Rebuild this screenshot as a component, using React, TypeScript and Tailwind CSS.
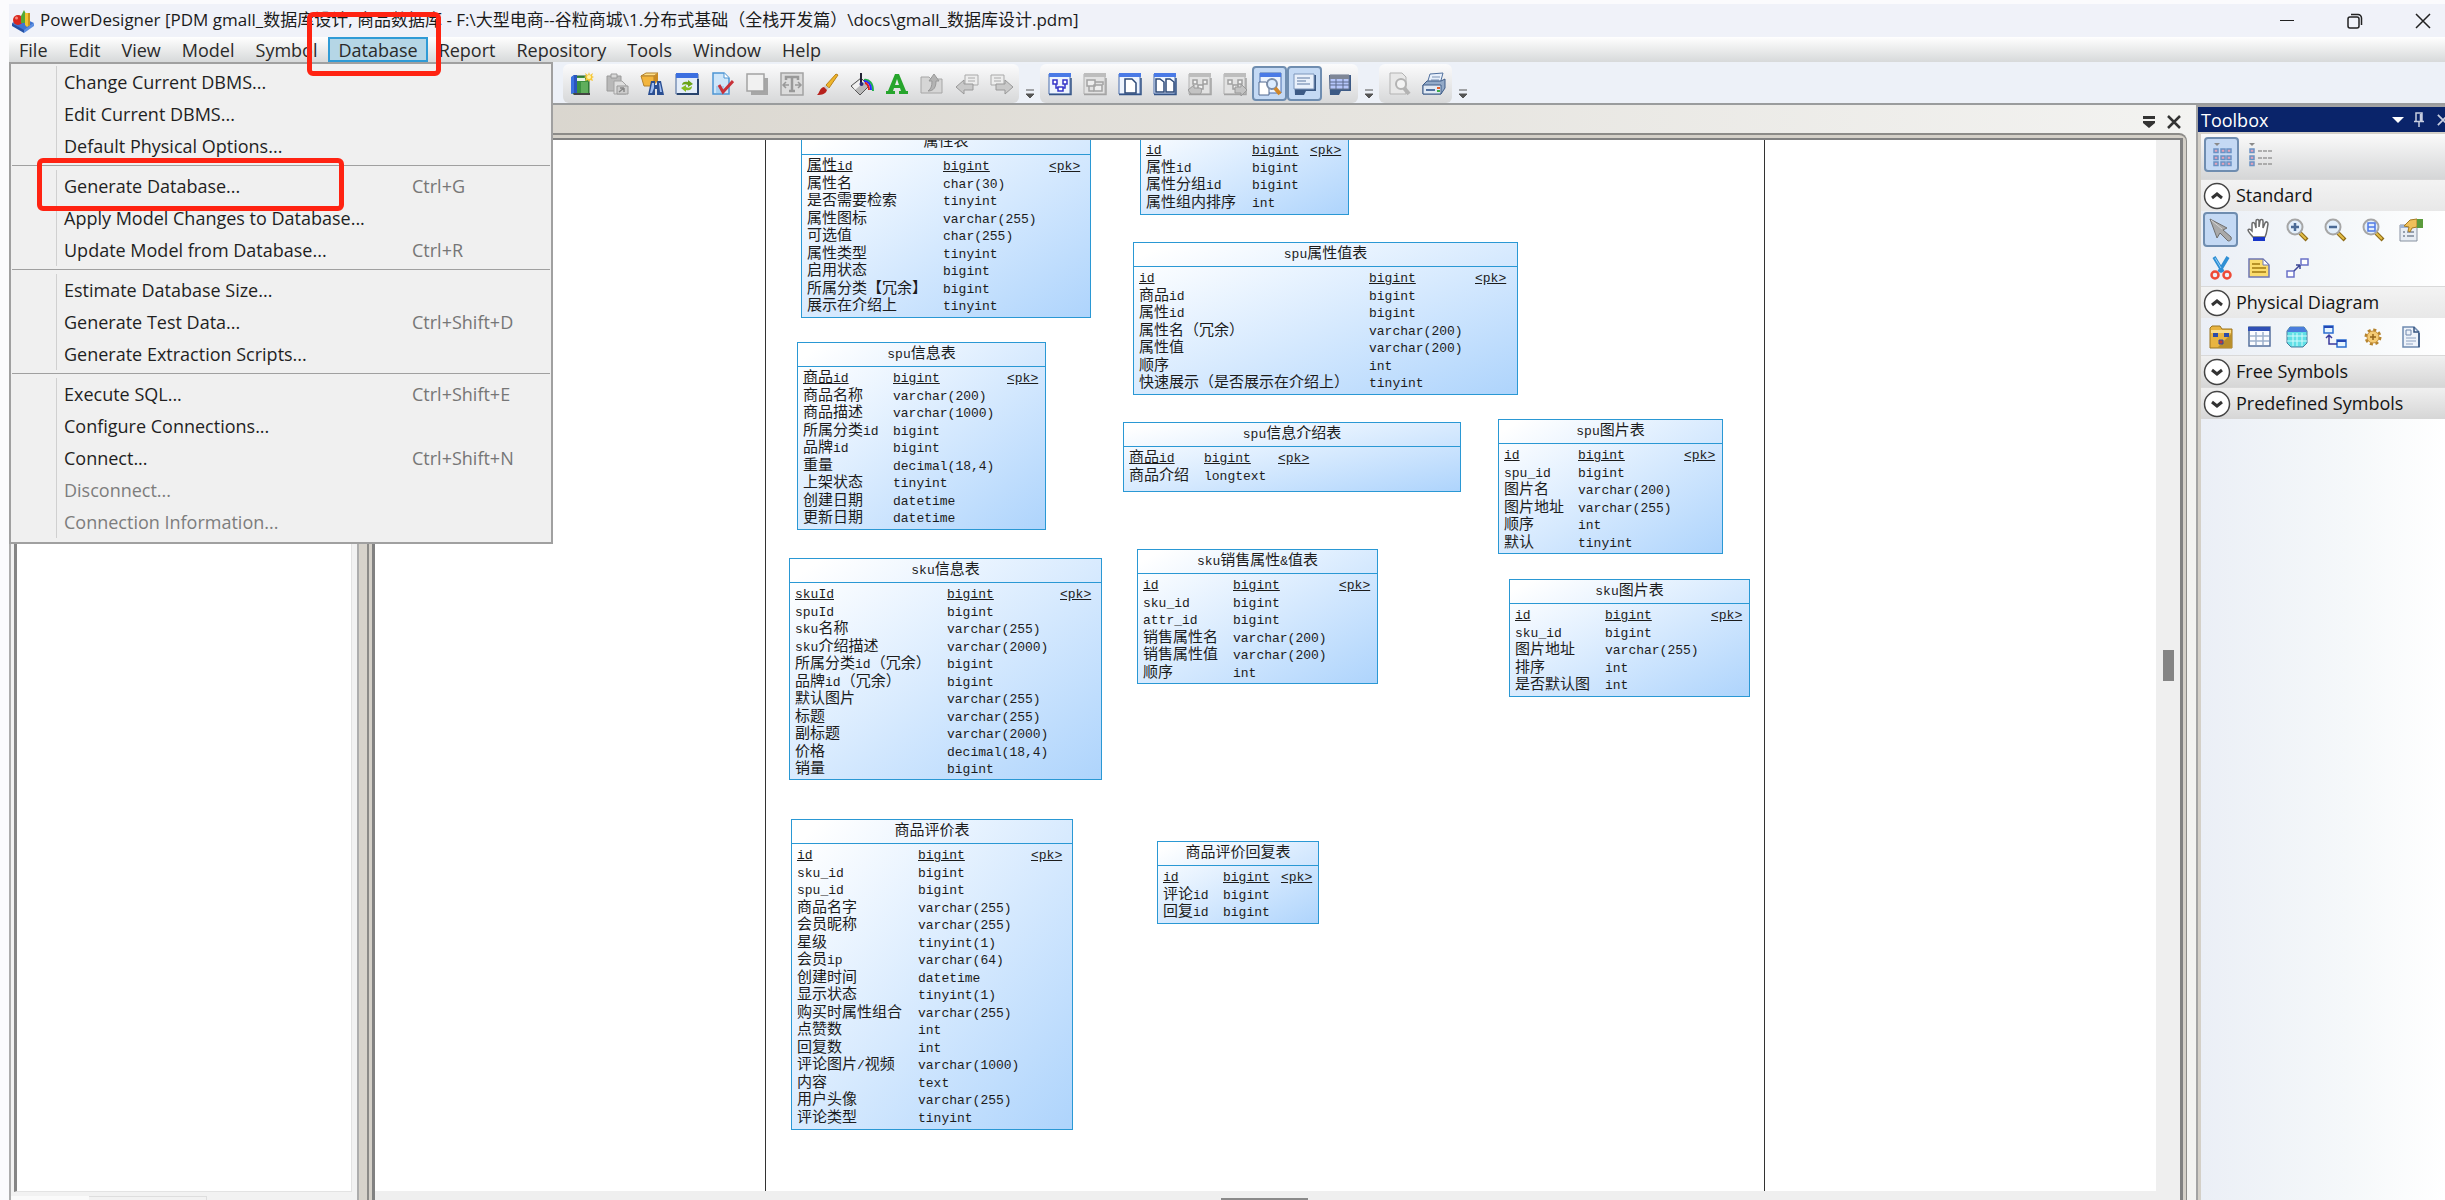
import clsx from "clsx";
import { Fragment, useState, type ReactNode } from "react";

type Column = [name: string, type: string];

interface EntityData {
  title: string;
  box: string;
  nameCol: string;
  typeCol: string;
  columns: Column[];
}

interface MenuEntry {
  label: string;
  shortcut?: string;
  disabled?: boolean;
}

const menus = [
  "File",
  "Edit",
  "View",
  "Model",
  "Symbol",
  "Database",
  "Report",
  "Repository",
  "Tools",
  "Window",
  "Help",
];

const databaseMenu: MenuEntry[][] = [
  [
    { label: "Change Current DBMS..." },
    { label: "Edit Current DBMS..." },
    { label: "Default Physical Options..." },
  ],
  [
    { label: "Generate Database...", shortcut: "Ctrl+G" },
    { label: "Apply Model Changes to Database..." },
    { label: "Update Model from Database...", shortcut: "Ctrl+R" },
  ],
  [
    { label: "Estimate Database Size..." },
    { label: "Generate Test Data...", shortcut: "Ctrl+Shift+D" },
    { label: "Generate Extraction Scripts..." },
  ],
  [
    { label: "Execute SQL...", shortcut: "Ctrl+Shift+E" },
    { label: "Configure Connections..." },
    { label: "Connect...", shortcut: "Ctrl+Shift+N" },
    { label: "Disconnect...", disabled: true },
    { label: "Connection Information...", disabled: true },
  ],
];

// First column of every entity is its primary key.
const entities: EntityData[] = [
  {
    title: "属性表",
    box: "left-[426px] top-[-10px] w-[290px] h-[188px]",
    nameCol: "w-[136px]",
    typeCol: "w-[106px]",
    columns: [
      ["属性id", "bigint"],
      ["属性名", "char(30)"],
      ["是否需要检索", "tinyint"],
      ["属性图标", "varchar(255)"],
      ["可选值", "char(255)"],
      ["属性类型", "tinyint"],
      ["启用状态", "bigint"],
      ["所属分类【冗余】", "bigint"],
      ["展示在介绍上", "tinyint"],
    ],
  },
  {
    title: "",
    box: "left-[765px] top-[-26px] w-[209px] h-[101px]",
    nameCol: "w-[106px]",
    typeCol: "w-[58px]",
    columns: [
      ["id", "bigint"],
      ["属性id", "bigint"],
      ["属性分组id", "bigint"],
      ["属性组内排序", "int"],
    ],
  },
  {
    title: "spu属性值表",
    box: "left-[758px] top-[102px] w-[385px] h-[153px]",
    nameCol: "w-[230px]",
    typeCol: "w-[106px]",
    columns: [
      ["id", "bigint"],
      ["商品id", "bigint"],
      ["属性id", "bigint"],
      ["属性名（冗余）", "varchar(200)"],
      ["属性值", "varchar(200)"],
      ["顺序", "int"],
      ["快速展示（是否展示在介绍上）", "tinyint"],
    ],
  },
  {
    title: "spu信息表",
    box: "left-[422px] top-[202px] w-[249px] h-[188px]",
    nameCol: "w-[90px]",
    typeCol: "w-[114px]",
    columns: [
      ["商品id", "bigint"],
      ["商品名称", "varchar(200)"],
      ["商品描述", "varchar(1000)"],
      ["所属分类id", "bigint"],
      ["品牌id", "bigint"],
      ["重量", "decimal(18,4)"],
      ["上架状态", "tinyint"],
      ["创建日期", "datetime"],
      ["更新日期", "datetime"],
    ],
  },
  {
    title: "spu信息介绍表",
    box: "left-[748px] top-[282px] w-[338px] h-[70px]",
    nameCol: "w-[75px]",
    typeCol: "w-[74px]",
    columns: [
      ["商品id", "bigint"],
      ["商品介绍", "longtext"],
    ],
  },
  {
    title: "spu图片表",
    box: "left-[1123px] top-[279px] w-[225px] h-[135px]",
    nameCol: "w-[74px]",
    typeCol: "w-[106px]",
    columns: [
      ["id", "bigint"],
      ["spu_id", "bigint"],
      ["图片名", "varchar(200)"],
      ["图片地址", "varchar(255)"],
      ["顺序", "int"],
      ["默认", "tinyint"],
    ],
  },
  {
    title: "sku图片表",
    box: "left-[1134px] top-[439px] w-[241px] h-[118px]",
    nameCol: "w-[90px]",
    typeCol: "w-[106px]",
    columns: [
      ["id", "bigint"],
      ["sku_id", "bigint"],
      ["图片地址", "varchar(255)"],
      ["排序", "int"],
      ["是否默认图", "int"],
    ],
  },
  {
    title: "sku信息表",
    box: "left-[414px] top-[418px] w-[313px] h-[222px]",
    nameCol: "w-[152px]",
    typeCol: "w-[113px]",
    columns: [
      ["skuId", "bigint"],
      ["spuId", "bigint"],
      ["sku名称", "varchar(255)"],
      ["sku介绍描述", "varchar(2000)"],
      ["所属分类id（冗余）", "bigint"],
      ["品牌id（冗余）", "bigint"],
      ["默认图片", "varchar(255)"],
      ["标题", "varchar(255)"],
      ["副标题", "varchar(2000)"],
      ["价格", "decimal(18,4)"],
      ["销量", "bigint"],
    ],
  },
  {
    title: "sku销售属性&值表",
    box: "left-[762px] top-[409px] w-[241px] h-[135px]",
    nameCol: "w-[90px]",
    typeCol: "w-[106px]",
    columns: [
      ["id", "bigint"],
      ["sku_id", "bigint"],
      ["attr_id", "bigint"],
      ["销售属性名", "varchar(200)"],
      ["销售属性值", "varchar(200)"],
      ["顺序", "int"],
    ],
  },
  {
    title: "商品评价表",
    box: "left-[416px] top-[679px] w-[282px] h-[311px]",
    nameCol: "w-[121px]",
    typeCol: "w-[113px]",
    columns: [
      ["id", "bigint"],
      ["sku_id", "bigint"],
      ["spu_id", "bigint"],
      ["商品名字", "varchar(255)"],
      ["会员昵称", "varchar(255)"],
      ["星级", "tinyint(1)"],
      ["会员ip", "varchar(64)"],
      ["创建时间", "datetime"],
      ["显示状态", "tinyint(1)"],
      ["购买时属性组合", "varchar(255)"],
      ["点赞数", "int"],
      ["回复数", "int"],
      ["评论图片/视频", "varchar(1000)"],
      ["内容", "text"],
      ["用户头像", "varchar(255)"],
      ["评论类型", "tinyint"],
    ],
  },
  {
    title: "商品评价回复表",
    box: "left-[782px] top-[701px] w-[162px] h-[83px]",
    nameCol: "w-[60px]",
    typeCol: "w-[58px]",
    columns: [
      ["id", "bigint"],
      ["评论id", "bigint"],
      ["回复id", "bigint"],
    ],
  },
];

function Svg({ children, className }: { children: ReactNode; className?: string }) {
  return (
    <svg viewBox="0 0 24 24" className={clsx("shrink-0", className ?? "size-6")} fill="none" aria-hidden="true">
      {children}
    </svg>
  );
}

function LogoIcon() {
  return (
    <Svg>
      <path d="M1 14 12 9l11 5-10 8z" fill="#3f74d1" />
      <path d="M1 14v3l12 7v-3z" fill="#2450a4" />
      <path d="M23 14v3l-10 7v-3z" fill="#5b8de0" />
      <circle cx="7" cy="11" r="5" fill="#d9281e" />
      <circle cx="5.500" cy="9" r="1.500" fill="#f58a80" />
      <path d="M10 7l3-6 3 6v7h-6z" fill="#52a935" />
      <path d="M14 4h5v12l-3 2-2-2z" fill="#f2c230" />
      <path d="M17 4h2v12l-2 1z" fill="#c8931b" />
    </Svg>
  );
}

/* ---------- toolbar icons ---------- */

function BookIcon() {
  return (
    <Svg>
      <path d="M3 4h16v18H3z" fill="#3c9140" stroke="#24602a" />
      <path d="M1 5l3-2v18l-3 1z" fill="#3b72e0" />
      <path d="M4 3h3v18H4z" fill="#2b55bd" />
      <path d="M7 6h8v3H7z" fill="#e9f5e4" />
      <path d="M11 10h7v11h-7z" fill="#5fae5c" />
      <path d="M4 22h16" stroke="#444" strokeWidth="2" />
      <path d="M19 0l1 3 3-2-1 3 2 1-2 1 1 3-3-1-1 2-1-2-3 1 1-3-2-1 2-1-1-3 3 2z" fill="#f6c73a" />
      <circle cx="19" cy="5" r="2" fill="#fff3a8" />
    </Svg>
  );
}

function PasteIcon() {
  return (
    <Svg>
      <path d="M2 4h14v15H2z" fill="#b9b9b9" stroke="#9a9a9a" />
      <path d="M6 2h6v4H6z" fill="#d9d9d9" stroke="#9a9a9a" />
      <path d="M9 9h8l4 4v9H9z" fill="#dedede" stroke="#a3a3a3" />
      <path d="M12 14h11v8H12z" fill="#cdcdcd" stroke="#999" />
      <path d="M14 20l5-4m0 0h-4m4 0v4" stroke="#888" strokeWidth="1.500" />
    </Svg>
  );
}

function FindIcon() {
  return (
    <Svg>
      <path d="M1 4l5-3h12l-4 3z" fill="#ffe08a" stroke="#b3812a" />
      <path d="M1 4h13v10H4z" fill="#f3b53d" stroke="#b3812a" />
      <path d="M14 4l4-3v8l-4 4z" fill="#c98a22" />
      <path d="M11 9h4v4h2V9h4l3 14h-7v-6h-2v6H8z" fill="#2b4f92" />
      <path d="M12 11h2v5l-2 5h-2zM19 11h1l2 9h-2z" fill="#9fbdf0" />
    </Svg>
  );
}

function RefreshIcon() {
  return (
    <Svg>
      <path d="M1 2h22v20H1z" fill="#e4edf9" stroke="#456598" />
      <path d="M1 1h22v5H1z" fill="#3c6fe0" />
      <path d="M2 22h21V7" stroke="#28446d" strokeWidth="2" />
      <path d="M7 13c0-3 3-4 6-3V8l5 4-5 3v-2c-2-1-4-1-6 0z" fill="#6aa319" />
      <path d="M17 14c0 4-3 5-6 4v2l-5-4 5-3v2c2 1 4 1 6-1z" fill="#86bd22" />
    </Svg>
  );
}

function CheckDocIcon() {
  return (
    <Svg>
      <path d="M3 1h11l5 5v16H3z" fill="#cfe6f9" stroke="#4d95d3" strokeWidth="1.500" />
      <path d="M14 1v5h5" fill="#fff" stroke="#4d95d3" />
      <path d="M6 14h8v7H6z" fill="#a7d0f0" />
      <path d="M9 13l4 7 10-11" stroke="#c8323a" strokeWidth="3" />
    </Svg>
  );
}

function ShadowIcon() {
  return (
    <Svg>
      <path d="M6 6h17v17H6z" fill="#a6a6a6" />
      <path d="M2 2h17v17H2z" fill="#f1f1f1" stroke="#a3a3a3" strokeWidth="1.500" />
    </Svg>
  );
}

function TextFrameIcon() {
  return (
    <Svg>
      <path d="M1 1h22v22H1z" fill="#dcdcdc" stroke="#a3a3a3" strokeWidth="1.500" />
      <path d="M6 8V5h12v3M12 5v14M9 19h6" stroke="#999" strokeWidth="2.500" />
      <path d="M3 13h6m-3-3-3 3 3 3M21 13h-6m3-3 3 3-3 3" stroke="#999" strokeWidth="1.500" />
    </Svg>
  );
}

function BrushIcon() {
  return (
    <Svg>
      <path d="M21 2l2 1-9 13-3-3z" fill="#eeb52a" stroke="#b9801a" />
      <path d="M10 13l4 3-2 2-3-3z" fill="#c9c9c9" />
      <path d="M9 15l3 3c-1 4-5 5-10 5 3-2 2-7 7-8z" fill="#b7211c" />
    </Svg>
  );
}

function BucketIcon() {
  return (
    <Svg>
      <path d="M11 6l8 8-9 9-9-9z" fill="#b9b9b9" stroke="#555" />
      <path d="M11 7l3 3-9 8-3-4z" fill="#f1f1f1" />
      <path d="M11 13V1" stroke="#223" strokeWidth="2" />
      <circle cx="11.500" cy="12" r="2" fill="#2c2c7a" />
      <path d="M14 8c5-1 9 3 9 11" stroke="#22b14c" strokeWidth="2" />
      <path d="M14 9c4 0 7 3 7 9" stroke="#2929ff" strokeWidth="2" />
      <path d="M15 11c2 0 4 3 4 7" stroke="#e02020" strokeWidth="2" />
    </Svg>
  );
}

function FontIcon() {
  return (
    <Svg>
      <path d="M10 2h4l7 17h2v3h-9v-3h2l-1-3H9l-1 3h2v3H1v-3h2zm2 5-2 6h4z" fill="#26a52c" fillRule="evenodd" />
    </Svg>
  );
}

function FolderUpIcon() {
  return (
    <Svg>
      <path d="M1 5h8l2 2h11v14H1z" fill="#d6d6d6" stroke="#a6a6a6" />
      <path d="M8 19c6 0 8-4 8-10h3l-5-7-5 7h3c0 5-1 8-4 10z" fill="#b3b3b3" stroke="#999" />
    </Svg>
  );
}

function ArrowIcon({ flip }: { flip?: boolean }) {
  return (
    <Svg className={clsx("size-6", flip && "-scale-x-100")}>
      <path d="M10 3h13v10H10z" fill="#ededed" stroke="#a9a9a9" />
      <path d="M13 6h7M13 9h7" stroke="#aaa" />
      <path d="M1 15l8-7v4h9v6H9v4z" fill="#c9c9c9" stroke="#999" />
    </Svg>
  );
}

function WindowIcon({ gray, children }: { gray?: boolean; children: ReactNode }) {
  return (
    <Svg>
      <path d="M1 2h21v20H1z" fill={gray ? "#e2e2e2" : "#eef4fd"} stroke={gray ? "#b0b0b0" : "#4a6fae"} />
      <path d="M1 1h22v4H1z" fill={gray ? "#bdbdbd" : "#4a7ae6"} />
      <path d="M1 22.500h22V6" stroke={gray ? "#a3a3a3" : "#345486"} strokeWidth="1.500" />
      {children}
    </Svg>
  );
}

function DiagramWindowIcon() {
  return (
    <WindowIcon>
      <path d="M5 8h4v4H5zM15 8h4v4h-4zM10 15h5v4h-5z" fill="#fff" stroke="#3535c8" strokeWidth="1.500" />
      <path d="M8 12v4h2M17 12v4h-2" stroke="#3535c8" strokeWidth="1.500" />
    </WindowIcon>
  );
}

function HistoryWindowIcon({ flip }: { flip?: boolean }) {
  return (
    <WindowIcon gray>
      <path d="M5 8h4v4H5zM15 8h4v4h-4zM10 13h5v4h-5z" fill="#f3f3f3" stroke="#a0a0a0" strokeWidth="1.500" />
      <path
        d={flip ? "M24 18l-6-6v3h-6v6h6v3z" : "M0 18l6-5v3h6c2 0 2 5 0 6H3z"}
        fill="#c3c3c3"
        stroke="#999"
      />
    </WindowIcon>
  );
}

function MagnifierDocIcon({ gray }: { gray?: boolean }) {
  return (
    <Svg>
      {gray ? (
        <path d="M3 1h12l4 4v17H3z" fill="#e8e8e8" stroke="#b3b3b3" />
      ) : (
        <>
          <path d="M2 1h21v20H2z" fill="#eef4fd" stroke="#4a6fae" />
          <path d="M2 1h21v4H2z" fill="#4a7ae6" />
          <path d="M1 10h7l3 3v10H1z" fill="#fff" stroke="#50688f" />
        </>
      )}
      <circle cx="14" cy="12" r="5" fill={gray ? "#f3f3f3" : "#dcecff"} stroke={gray ? "#b3b3b3" : "#7b8da8"} strokeWidth="2" />
      <path d="M17 16l5 6" stroke={gray ? "#b3b3b3" : "#d0872b"} strokeWidth="4" />
    </Svg>
  );
}

function OutputIcon() {
  return (
    <Svg>
      <path d="M1 3h22v16H13l-2 4H2z" fill="#3d5a85" />
      <path d="M1 2h20v15H1z" fill="#e9f0fb" stroke="#7d95bb" />
      <path d="M4 6h13M4 9h9M4 12h13" stroke="#8ca0c0" strokeWidth="1.500" />
    </Svg>
  );
}

function ResultGridIcon() {
  return (
    <Svg>
      <path d="M1 3h22v16H13l-2 4H2z" fill="#3d5a85" />
      <path d="M2 3h19v14H2z" fill="#b6c6fa" stroke="#6a778f" />
      <path d="M2 3h19v4H2z" fill="#7e8696" />
      <path d="M2 10h19M2 13h19M8 7v10M15 7v10" stroke="#5c6a8c" />
    </Svg>
  );
}

function PrinterIcon() {
  return (
    <Svg>
      <path d="M8 2l13-1-3 11H5z" fill="#e8f0fb" stroke="#52719f" />
      <path d="M10 5h8M9 8h8" stroke="#7c93b5" />
      <path d="M1 13l4-4h14l4-2v9l-4 6H1z" fill="#93aac8" stroke="#3e5c88" />
      <path d="M1 13h18v9H1z" fill="#e0e9f4" stroke="#3e5c88" />
      <path d="M4 18h9" stroke="#52719f" strokeWidth="2" />
      <path d="M15 16h3" stroke="#e25b2a" strokeWidth="2" />
      <path d="M15 19h3" stroke="#3fae49" strokeWidth="2" />
    </Svg>
  );
}

function DocsWindowIcon({ count }: { count: number }) {
  return (
    <WindowIcon>
      {count === 1 ? (
        <path d="M7 7h7l4 4v10H7z" fill="#fff" stroke="#2e4a78" strokeWidth="1.500" />
      ) : (
        <path d="M3 7h4l4 3v10H3zM13 7h4l4 3v10h-8z" fill="#fff" stroke="#2e4a78" strokeWidth="1.500" />
      )}
    </WindowIcon>
  );
}

/* ---------- toolbox icons ---------- */

function GridViewIcon() {
  return (
    <Svg>
      <path d="M4 0h6L7 3z" fill="#8a8a8a" />
      {[5, 12, 18].map((y) =>
        [4, 11, 17].map((x) => (
          <rect key={`${x}-${y}`} x={x} y={y + 1} width="4" height="3.500" fill="#e3a3b8" stroke="#6a92c4" strokeWidth="1.500" />
        )),
      )}
    </Svg>
  );
}

function ListViewIcon() {
  return (
    <Svg>
      <path d="M0 0h6L3 3z" fill="#8a8a8a" />
      {[6, 13, 19].map((y) => (
        <Fragment key={y}>
          <rect x="1" y={y} width="4" height="3.500" fill="#e3a3b8" stroke="#6a92c4" strokeWidth="1.500" />
          <path d={`M9 ${y + 2}h14`} stroke="#999" strokeWidth="1.500" strokeDasharray="4 1" />
        </Fragment>
      ))}
    </Svg>
  );
}

function PointerIcon() {
  return (
    <Svg>
      <path d="M1 1l17 9-4 2 8 7c1 3-1 4-3 4l-8-8-3 5z" fill="#a9a9a9" stroke="#6f6f6f" />
      <path d="M2 2l11 9" stroke="#d4d4d4" />
    </Svg>
  );
}

function HandIcon() {
  return (
    <Svg>
      <path
        d="M6 19c-2-3-5-5-5-7 1-2 3 0 4 1V6c0-2 2-2 3 0l1 4V3c0-2 3-2 3 0v6l1-6c0-2 3-2 3 0v7l2-5c1-2 3-1 3 1-1 5-1 9-3 13z"
        fill="#fff"
        stroke="#6b6b6b"
        strokeWidth="1.500"
      />
      <path d="M6 19h12v4H6z" fill="#1836c8" />
    </Svg>
  );
}

function ZoomIcon({ children }: { children: ReactNode }) {
  return (
    <Svg>
      <path d="M15 15l7 7" stroke="#8d6b16" strokeWidth="4" />
      <path d="M15 15l6 6" stroke="#e3bd45" strokeWidth="2" />
      <circle cx="10" cy="9" r="7.500" fill="#e3effb" stroke="#a6a6a6" strokeWidth="2" />
      {children}
    </Svg>
  );
}

function PropertiesIcon() {
  return (
    <Svg>
      <path d="M1 7h17v16H1z" fill="#e8edf4" stroke="#8791a0" />
      <path d="M1 7h17v3H1z" fill="#9fb4d4" />
      <path d="M4 14h2M8 14h7M4 18h2M8 18h7" stroke="#7b8698" strokeWidth="1.500" />
      <path d="M5 8l6-6 7-1v8l-5 1-2 4-2-1 1-4z" fill="#f0c05a" stroke="#a67a22" />
      <path d="M18 1h6v9h-6z" fill="#5b9b3c" />
    </Svg>
  );
}

function ScissorsIcon() {
  return (
    <Svg>
      <path d="M5 1l9 15M19 1l-9 15" stroke="#2f8fd4" strokeWidth="3.500" />
      <path d="M6 2l6 10" stroke="#8fcdf6" />
      <circle cx="6" cy="19" r="3.500" stroke="#ee4a36" strokeWidth="2.500" />
      <circle cx="18" cy="19" r="3.500" stroke="#ee4a36" strokeWidth="2.500" />
    </Svg>
  );
}

function NoteIcon() {
  return (
    <Svg>
      <path d="M2 3h14l6 6v12H2z" fill="#fbdc6d" stroke="#6d76b4" strokeWidth="1.500" />
      <path d="M16 3v6h6z" fill="#fff" stroke="#6d76b4" />
      <path d="M5 8h8M5 12h14M5 16h14" stroke="#a27a10" strokeWidth="1.500" />
    </Svg>
  );
}

function LinkIcon() {
  return (
    <Svg>
      <path d="M2 15h7v6H2zM16 3h7v6h-7z" fill="#fff" stroke="#6b72c8" strokeWidth="1.500" />
      <path d="M9 15l6-6m0 0h-4m4 0v4" stroke="#3d4796" strokeWidth="1.500" />
    </Svg>
  );
}

function PackageIcon() {
  return (
    <Svg>
      <path d="M1 3l2-2h8l2 3h10v19H1z" fill="#e8b441" stroke="#9b7420" />
      <path d="M23 8v15H8z" fill="#b98f2c" />
      <path d="M2 5h20v3H2z" fill="#f8dc8c" />
      <path d="M4 8h5v4H4zM15 8h5v4h-5z" fill="#2c4ba8" />
      <path d="M10 15h4v4h-4z" fill="#c53a2f" stroke="#2c4ba8" />
    </Svg>
  );
}

function TableIcon() {
  return (
    <Svg>
      <path d="M2 2h21v19H2z" fill="#fbfcff" stroke="#55709d" strokeWidth="1.500" />
      <path d="M1 2h22v4H1z" fill="#2f4fb5" />
      <path d="M3 11h19M3 16h19M9 7v13M16 7v13" stroke="#9fb1cd" strokeWidth="1.500" />
    </Svg>
  );
}

function ViewIcon() {
  return (
    <Svg>
      <path d="M5 2h14l3 4v12l-4 4H6l-4-4V6z" fill="#5fdfe6" stroke="#4a7d9d" />
      <path d="M5 2h14l3 5H2z" fill="#4a7ddc" />
      <path d="M2 11h20M2 16h20M8 8v13M12 8v13M17 8v13" stroke="#d4fbfc" />
    </Svg>
  );
}

function ReferenceIcon() {
  return (
    <Svg>
      <path d="M1 1h9v7H1zM14 15h9v7h-9z" fill="#e6f5ff" stroke="#2b6dd0" strokeWidth="1.500" />
      <path d="M1 1h9v2H1zM14 15h9v2h-9z" fill="#2548b5" />
      <path d="M6 10v9h8M3 13l3-3 3 3" stroke="#3a3a9c" strokeWidth="1.500" />
    </Svg>
  );
}

function ProcedureIcon() {
  return (
    <Svg>
      <circle cx="12" cy="12" r="7" stroke="#b5842f" strokeWidth="3" strokeDasharray="3 2.500" />
      <circle cx="12" cy="12" r="6" fill="#f5cb74" stroke="#c8913a" />
      <path d="M12 9v6M9 12h6" stroke="#94641a" strokeWidth="1.500" />
    </Svg>
  );
}

function FileIcon() {
  return (
    <Svg>
      <path d="M4 2h11l5 5v15H4z" fill="#eef3fa" stroke="#6f8ab0" strokeWidth="1.500" />
      <path d="M15 2v5h5M20 8v14" stroke="#35537f" strokeWidth="1.500" />
      <path d="M7 5h5v5H7z" stroke="#6e87ad" />
      <path d="M7 13h10M7 16h10M7 19h7" stroke="#8ea2c0" />
    </Svg>
  );
}

/* ---------- shared controls ---------- */

function ToolButton({
  label,
  active,
  children,
}: {
  label: string;
  active?: boolean;
  children: ReactNode;
}) {
  return (
    <button
      type="button"
      aria-label={label}
      className={clsx(
        "flex h-[35px] w-[35px] shrink-0 items-center justify-center rounded",
        active && "border-2 border-[#6f8db0] bg-[#c4d9f4]",
      )}
    >
      {children}
    </button>
  );
}

function Overflow() {
  return (
    <button type="button" aria-label="Toolbar options" className="flex w-[21px] items-end justify-center pb-1">
      <svg viewBox="0 0 10 10" className="h-[10px] w-[10px]" aria-hidden="true">
        <path d="M1 1h8M1 5h8L5 9z" fill="#555" stroke="#555" />
      </svg>
    </button>
  );
}

function ToolbarGroup({ children }: { children: ReactNode }) {
  return (
    <div className="flex">
      <div className="flex items-center rounded-md bg-linear-to-b from-[#fbfbfc] to-[#d7d8d9] pl-px">{children}</div>
      <Overflow />
    </div>
  );
}

// Latin runs are set smaller so that two of them are about as wide as one Han character.
function MixedText({ text }: { text: string }) {
  return (
    <>
      {text.split(/([\x20-\x7e]+)/).map((run, i) =>
        i % 2 === 1 ? (
          <span key={i} className="text-[13px]">
            {run}
          </span>
        ) : (
          run
        ),
      )}
    </>
  );
}

function Entity({ title, box, nameCol, typeCol, columns }: EntityData) {
  return (
    <section
      className={clsx(
        "absolute flex flex-col border border-[#2a98d4] bg-linear-to-br from-white from-5% to-[#aed4fc] text-[15px] text-[#1c1c1c]",
        box,
      )}
    >
      <h2 className="flex h-6 shrink-0 items-center justify-center border-b border-[#2a98d4] leading-[22px]">
        <span>
          <MixedText text={title} />
        </span>
      </h2>
      <table className="mt-[3px] ml-[5px] table-fixed border-collapse text-left">
        <tbody>
          {columns.map(([name, type], i) => (
            <tr
              key={name}
              className={clsx("leading-[17px] whitespace-nowrap odd:h-[17px] even:h-[18px]", i === 0 && "underline")}
            >
              <td className={clsx("p-0", nameCol)}>
                <MixedText text={name} />
              </td>
              <td className={clsx("p-0", typeCol)}>
                <MixedText text={type} />
              </td>
              <td className="p-0">{i === 0 && <MixedText text="<pk>" />}</td>
            </tr>
          ))}
        </tbody>
      </table>
    </section>
  );
}

function TitleBar() {
  return (
    <header className="flex h-[33px] shrink-0 items-center bg-[#f0f2f9] pl-[2px] text-[17px] text-[#1b1b1b]">
      <LogoIcon />
      <h1 className="ml-[5px] pb-px whitespace-nowrap">
        PowerDesigner [PDM gmall_数据库设计, 商品数据库 - F:\大型电商--谷粒商城\1.分布式基础（全栈开发篇）\docs\gmall_数据库设计.pdm]
      </h1>
      <div className="ml-auto flex h-full">
        <button type="button" aria-label="Minimize" className="flex w-[68px] items-center justify-center">
          <svg viewBox="0 0 16 16" className="size-4" stroke="#222" fill="none">
            <path d="M1 7.500h14" />
          </svg>
        </button>
        <button type="button" aria-label="Restore" className="flex w-[68px] items-center justify-center">
          <svg viewBox="0 0 16 16" className="size-4" stroke="#222" fill="none" strokeWidth="1.500">
            <rect x="1" y="4" width="11" height="11" rx="2" />
            <path d="M4 1.500h7a3.500 3.500 0 0 1 3.500 3.500v7" />
          </svg>
        </button>
        <button type="button" aria-label="Close" className="flex w-[56px] items-center justify-center pl-3">
          <svg viewBox="0 0 16 16" className="size-4" stroke="#222" fill="none" strokeWidth="1.500">
            <path d="M1 1l14 14M15 1L1 15" />
          </svg>
        </button>
      </div>
    </header>
  );
}

function DatabaseMenu() {
  return (
    <div className="absolute top-full left-0 z-20 w-[544px] border-2 border-[#a0a0a0] bg-[#f0f0f0] pt-[2px] pb-1">
      {databaseMenu.map((group, i) => (
        <ul key={i}>
          {i > 0 && <li role="separator" className="mx-px mt-[3px] mb-[4px] h-px bg-[#a0a0a0]" />}
          {group.map((entry) => (
            <li key={entry.label}>
              <button
                type="button"
                disabled={entry.disabled}
                className="flex h-8 w-full items-center text-left whitespace-nowrap text-[#1f1f1f] disabled:text-[#7d7d7d]"
              >
                <span className="w-[46px] shrink-0 self-stretch border-r border-[#d0d0d0]" />
                <span className="flex-1 pl-[7px]">{entry.label}</span>
                {entry.shortcut && <span className="w-[139px] text-[#767676]">{entry.shortcut}</span>}
              </button>
            </li>
          ))}
        </ul>
      ))}
    </div>
  );
}

function MenuBar() {
  const [open, setOpen] = useState("Database");

  return (
    <nav className="relative flex h-[25px] shrink-0 gap-px bg-linear-to-b from-white to-[#d7d9da] text-[18px] leading-5 text-[#2a2a2a]">
      {menus.map((menu) => (
        <button
          key={menu}
          type="button"
          onClick={() => setOpen(open === menu ? "" : menu)}
          className={clsx(
            "border-2 px-2",
            open === menu ? "border-[#2f9bd6] bg-[#b5d6e6]" : "border-transparent",
          )}
        >
          {menu}
        </button>
      ))}
      {open === "Database" && <DatabaseMenu />}
      {/* highlighted steps */}
      <div className="pointer-events-none absolute top-[-25px] left-[298px] z-30 h-[64px] w-[134px] rounded-md border-[5px] border-[#ff2312]" />
      <div className="pointer-events-none absolute top-[121px] left-[28px] z-30 h-[53px] w-[307px] rounded-md border-[5px] border-[#ff2312]" />
    </nav>
  );
}

function Toolbar() {
  return (
    <div className="flex h-[43px] shrink-0 border-b-2 border-[#9a9c9d] bg-[#edf1f8] pt-[2px] pl-[554px]">
      <ToolbarGroup>
        <ToolButton label="New model"><BookIcon /></ToolButton>
        <ToolButton label="Paste as shortcut"><PasteIcon /></ToolButton>
        <ToolButton label="Find objects"><FindIcon /></ToolButton>
        <ToolButton label="Refresh"><RefreshIcon /></ToolButton>
        <ToolButton label="Check model"><CheckDocIcon /></ToolButton>
        <ToolButton label="Shadow"><ShadowIcon /></ToolButton>
        <ToolButton label="Adjust to text"><TextFrameIcon /></ToolButton>
        <ToolButton label="Line style"><BrushIcon /></ToolButton>
        <ToolButton label="Fill"><BucketIcon /></ToolButton>
        <ToolButton label="Font"><FontIcon /></ToolButton>
        <ToolButton label="Up one level"><FolderUpIcon /></ToolButton>
        <ToolButton label="Previous diagram"><ArrowIcon /></ToolButton>
        <ToolButton label="Next diagram"><ArrowIcon flip /></ToolButton>
      </ToolbarGroup>
      <ToolbarGroup>
        <div className="flex px-px">
          <ToolButton label="Whole diagram"><DiagramWindowIcon /></ToolButton>
          <ToolButton label="Selection view">
            <WindowIcon gray>
              <path d="M4 8h8v6H4zM11 13h8v6h-8z" fill="#eee" stroke="#a3a3a3" strokeWidth="1.500" />
              <path d="M6 14v5h5M12 10h8v3" stroke="#a3a3a3" strokeWidth="1.500" />
            </WindowIcon>
          </ToolButton>
          <ToolButton label="Single page"><DocsWindowIcon count={1} /></ToolButton>
          <ToolButton label="All pages"><DocsWindowIcon count={2} /></ToolButton>
          <ToolButton label="Previous view"><HistoryWindowIcon /></ToolButton>
          <ToolButton label="Next view"><HistoryWindowIcon flip /></ToolButton>
          <ToolButton label="Browser" active><MagnifierDocIcon /></ToolButton>
          <ToolButton label="Output" active><OutputIcon /></ToolButton>
          <ToolButton label="Result list"><ResultGridIcon /></ToolButton>
        </div>
      </ToolbarGroup>
      <ToolbarGroup>
        <div className="flex px-px">
          <ToolButton label="Print preview"><MagnifierDocIcon gray /></ToolButton>
          <ToolButton label="Print"><PrinterIcon /></ToolButton>
        </div>
      </ToolbarGroup>
    </div>
  );
}

function BrowserPane() {
  return (
    <aside className="flex w-[350px] shrink-0 flex-col border-x-2 border-[#adadad] bg-[#f2f2f2]">
      <div className="mr-[5px] ml-[3px] flex-1 border-r border-b border-l-[3px] border-[#e3e3e3] border-l-[#858585] bg-white" />
      <div className="flex h-2 pt-1">
        <div className="w-[78px] bg-[#fafafa]" />
        <div className="w-[118px] border-t border-r border-[#dedede]" />
      </div>
    </aside>
  );
}

function DiagramArea() {
  return (
    <main className="flex min-w-0 flex-1 flex-col bg-linear-to-r from-[#d7d3cb] to-[#f3f3f1] pr-[9px] pl-2">
      <div className="flex h-7 shrink-0 items-center justify-end gap-3 pt-[6px] pr-[6px]">
        <button type="button" aria-label="Active files">
          <svg viewBox="0 0 12 12" className="size-3" aria-hidden="true">
            <path d="M0 0h12v3H0zM0 5h12v2L6 12 0 7z" fill="#333" />
          </svg>
        </button>
        <button type="button" aria-label="Close diagram">
          <svg viewBox="0 0 14 14" className="size-[14px]" stroke="#333" strokeWidth="2.500" aria-hidden="true">
            <path d="M1 1l12 12M13 1L1 13" />
          </svg>
        </button>
      </div>
      <div className="flex min-h-0 flex-1 rounded-tr-lg border-t-2 border-r border-l-2 border-[#8c8b88] bg-[#d4d0c8] px-[3px] pt-[3px]">
        <div className="flex min-w-0 flex-1 border-x-[3px] border-t-2 border-[#818181] bg-[#efefef]">
          <div className="flex min-w-0 flex-1 flex-col">
            <div className="relative flex-1 overflow-hidden bg-white">
              <div className="absolute inset-y-0 left-[390px] w-[1000px] border-x border-[#333]" />
              {entities.map((entity) => (
                <Entity key={entity.box} {...entity} />
              ))}
            </div>
            <div className="flex h-[9px] shrink-0 items-end justify-center pr-[3px]">
              <div className="h-[2px] w-[87px] bg-[#8a8a8a]" />
            </div>
          </div>
          <div className="flex w-6 shrink-0 flex-col items-center">
            <div className="flex-1" />
            <div className="h-[31px] w-[11px] bg-[#858585]" />
            <div className="flex-1 pb-[9px]" />
          </div>
        </div>
      </div>
    </main>
  );
}

function ToolSection({
  title,
  defaultOpen,
  children,
}: {
  title: string;
  defaultOpen?: boolean;
  children?: ReactNode;
}) {
  const [open, setOpen] = useState(Boolean(defaultOpen));

  return (
    <section>
      <button
        type="button"
        onClick={() => setOpen(!open)}
        className={clsx(
          "flex h-8 w-full items-center gap-[5px] border-t border-[#d9d9d9] bg-linear-to-b pl-[2px] text-left whitespace-nowrap",
          defaultOpen ? "from-[#f3f3f3] to-[#e8e8e8]" : "from-[#f0f0f0] to-[#d6d6d6]",
        )}
      >
        <svg viewBox="0 0 28 28" className="size-7 shrink-0" fill="none" aria-hidden="true">
          <circle cx="14" cy="14" r="12.500" fill="#fff" stroke="#444" strokeWidth="1.500" />
          <path d={open ? "M9 16l5-4 5 4" : "M9 12l5 4 5-4"} stroke="#333" strokeWidth="3" />
        </svg>
        {title}
      </button>
      {open && <div className="flex flex-wrap gap-[3px] py-px pl-[2px]">{children}</div>}
    </section>
  );
}

function Toolbox() {
  return (
    <aside className="flex w-[249px] shrink-0 flex-col overflow-hidden border-t-2 border-l-2 border-[#a3a3a3] text-[18px] text-[#141414]">
      <div className="flex h-[25px] shrink-0 items-center bg-[#0a246a] pl-[3px] text-white">
        <span className="flex-1 leading-6">Toolbox</span>
        <svg viewBox="0 0 12 8" className="mr-[9px] h-2 w-3" aria-hidden="true">
          <path d="M0 1h12L6 7z" fill="#fff" />
        </svg>
        <svg viewBox="0 0 12 16" className="mr-[12px] h-4 w-3" fill="none" stroke="#c8cee0" strokeWidth="1.500" aria-hidden="true">
          <path d="M3 9V1h6v8M1 9.500h10M6 10v5M7.500 2v7" />
        </svg>
        <svg viewBox="0 0 14 14" className="-mr-1 size-3" stroke="#c8cee0" strokeWidth="2" aria-hidden="true">
          <path d="M1 1l12 12M13 1L1 13" />
        </svg>
      </div>
      <div className="flex-1 bg-[#d4d0c8] pt-[2px] pl-[3px]">
        <div className="h-full bg-linear-to-r from-[#ebeff6] via-[#f5f8fa] via-60% to-white">
          <div className="flex h-[45px] items-center gap-1 bg-linear-to-b from-[#fafafa] to-[#d5d6d7] pb-1 pl-[3px]">
            <ToolButton label="Icon view" active><GridViewIcon /></ToolButton>
            <ToolButton label="List view"><ListViewIcon /></ToolButton>
          </div>
          <ToolSection title="Standard" defaultOpen>
            <ToolButton label="Pointer" active><PointerIcon /></ToolButton>
            <ToolButton label="Grabber"><HandIcon /></ToolButton>
            <ToolButton label="Zoom in">
              <ZoomIcon><path d="M10 5v8M6 9h8" stroke="#4a6a96" strokeWidth="2.500" /></ZoomIcon>
            </ToolButton>
            <ToolButton label="Zoom out">
              <ZoomIcon><path d="M6 9h8" stroke="#4a6a96" strokeWidth="2.500" /></ZoomIcon>
            </ToolButton>
            <ToolButton label="Open diagram">
              <ZoomIcon><path d="M7 5h7v8H7zM7 9h7" stroke="#4f79e6" strokeWidth="1.500" /></ZoomIcon>
            </ToolButton>
            <ToolButton label="Properties"><PropertiesIcon /></ToolButton>
            <ToolButton label="Delete"><ScissorsIcon /></ToolButton>
            <ToolButton label="Note"><NoteIcon /></ToolButton>
            <ToolButton label="Link"><LinkIcon /></ToolButton>
          </ToolSection>
          <ToolSection title="Physical Diagram" defaultOpen>
            <ToolButton label="Package"><PackageIcon /></ToolButton>
            <ToolButton label="Table"><TableIcon /></ToolButton>
            <ToolButton label="View"><ViewIcon /></ToolButton>
            <ToolButton label="Reference"><ReferenceIcon /></ToolButton>
            <ToolButton label="Procedure"><ProcedureIcon /></ToolButton>
            <ToolButton label="File"><FileIcon /></ToolButton>
          </ToolSection>
          <ToolSection title="Free Symbols" />
          <ToolSection title="Predefined Symbols" />
        </div>
      </div>
    </aside>
  );
}

export default function App() {
  return (
    <div className="flex h-screen flex-col overflow-hidden bg-[#fbfbfd] pt-1 pl-[9px] font-['Open_Sans','Noto_Sans_CJK_SC',sans-serif]">
      <TitleBar />
      <MenuBar />
      <Toolbar />
      <div className="flex min-h-0 flex-1">
        <BrowserPane />
        <div className="flex min-w-0 flex-1 font-['Liberation_Mono','Noto_Sans_CJK_SC',monospace]">
          <DiagramArea />
        </div>
        <Toolbox />
      </div>
    </div>
  );
}
